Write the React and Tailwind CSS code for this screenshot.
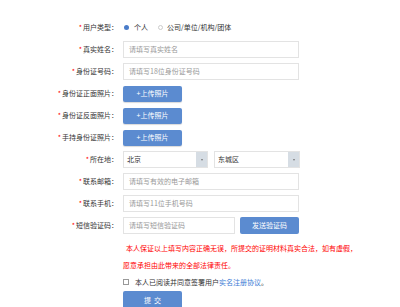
import React from 'react';

const font = { fontFamily: '"Noto Sans CJK SC", "Noto Sans", sans-serif' };

const Label = ({ children }) => (
  <div className="flex items-center justify-end h-[17px] text-[7px] text-[#333] whitespace-nowrap pr-[5px]">
    <span className="text-[#f00] mr-[1px]">*</span>
    {children}：
  </div>
);

const TextInput = ({ placeholder, className = 'w-[176px]' }) => (
  <div className={`h-[17px] border border-[#e3e3e3] bg-white flex items-center pl-[5px] text-[7px] text-[#999] ${className}`}>
    {placeholder}
  </div>
);

const UploadButton = ({ label = '+上传照片' }) => (
  <div className="h-[16px] w-[59px] rounded-[2px] bg-[#5b8bd0] text-white text-[7px] flex items-center justify-center shadow-[0_1px_1px_rgba(0,0,0,0.15)]">
    {label}
  </div>
);

const Select = ({ value, className }) => (
  <div className={`h-[17px] border border-[#e3e3e3] bg-white flex items-center text-[7px] text-[#333] ${className}`}>
    <span className="flex-1 pl-[3px]">{value}</span>
    <span className="w-[11px] h-full bg-[#d6dde4] flex items-center justify-center">
      <span className="block w-0 h-0 border-l-[1.5px] border-r-[1.5px] border-t-[2px] border-l-transparent border-r-transparent border-t-[#777]" />
    </span>
  </div>
);

const rows = [
  { label: '真实姓名', field: <TextInput placeholder="请填写真实姓名" /> },
  { label: '身份证号码', field: <TextInput placeholder="请填写18位身份证号码" /> },
  { label: '身份证正面照片', field: <UploadButton /> },
  { label: '身份证反面照片', field: <UploadButton /> },
  { label: '手持身份证照片', field: <UploadButton /> },
  {
    label: '所在地',
    field: (
      <div className="flex gap-[6px]">
        <Select value="北京" className="w-[85px]" />
        <Select value="东城区" className="w-[86px]" />
      </div>
    ),
  },
  { label: '联系邮箱', field: <TextInput placeholder="请填写有效的电子邮箱" /> },
  { label: '联系手机', field: <TextInput placeholder="请填写11位手机号码" /> },
  {
    label: '短信验证码',
    field: (
      <div className="flex gap-[5px]">
        <TextInput placeholder="请填写短信验证码" className="w-[112px]" />
        <div className="h-[17px] w-[59px] rounded-[2px] bg-[#5b8bd0] text-white text-[7px] flex items-center justify-center">
          发送验证码
        </div>
      </div>
    ),
  },
];

export default function App() {
  return (
    <div className="w-[400px] h-[307px] bg-white overflow-hidden pt-[19px]" style={font}>
      <div className="grid grid-cols-[123px_1fr] gap-y-[5px]">
        <Label>用户类型</Label>
        <div className="flex items-center h-[17px] text-[7px] text-[#333]">
          <span className="w-[5px] h-[5px] rounded-full bg-[#4a7cc9] ml-[1px] mr-[5px]" />
          <span>个人</span>
          <span className="w-[5px] h-[5px] rounded-full border border-[#ccc] ml-[10px] mr-[4px]" />
          <span>公司/单位/机构/团体</span>
        </div>
        {rows.map((r) => (
          <React.Fragment key={r.label}>
            <Label>{r.label}</Label>
            <div className="flex items-center">{r.field}</div>
          </React.Fragment>
        ))}
      </div>
      <div className="pl-[123px] mt-[6px] text-[7px] text-[#f00] leading-[17px]">
        <div className="pl-[3px] whitespace-nowrap">本人保证以上填写内容正确无误，所提交的证明材料真实合法，如有虚假，</div>
        <div className="whitespace-nowrap">愿意承担由此带来的全部法律责任。</div>
      </div>
      <div className="pl-[123px] flex items-center h-[16px] text-[7px] text-[#333]">
        <span className="w-[6px] h-[6px] border border-[#999] bg-white mr-[6px]" />
        <span>本人已阅读并同意签署用户<span className="text-[#3a7bd5]">实名注册协议</span>。</span>
      </div>
      <div className="pl-[123px] mt-[1px]">
        <div className="h-[18px] w-[59px] rounded-[2px] bg-[#5b8bd0] text-white text-[7px] flex items-center justify-center">
          提&nbsp;&nbsp;交
        </div>
      </div>
    </div>
  );
}
